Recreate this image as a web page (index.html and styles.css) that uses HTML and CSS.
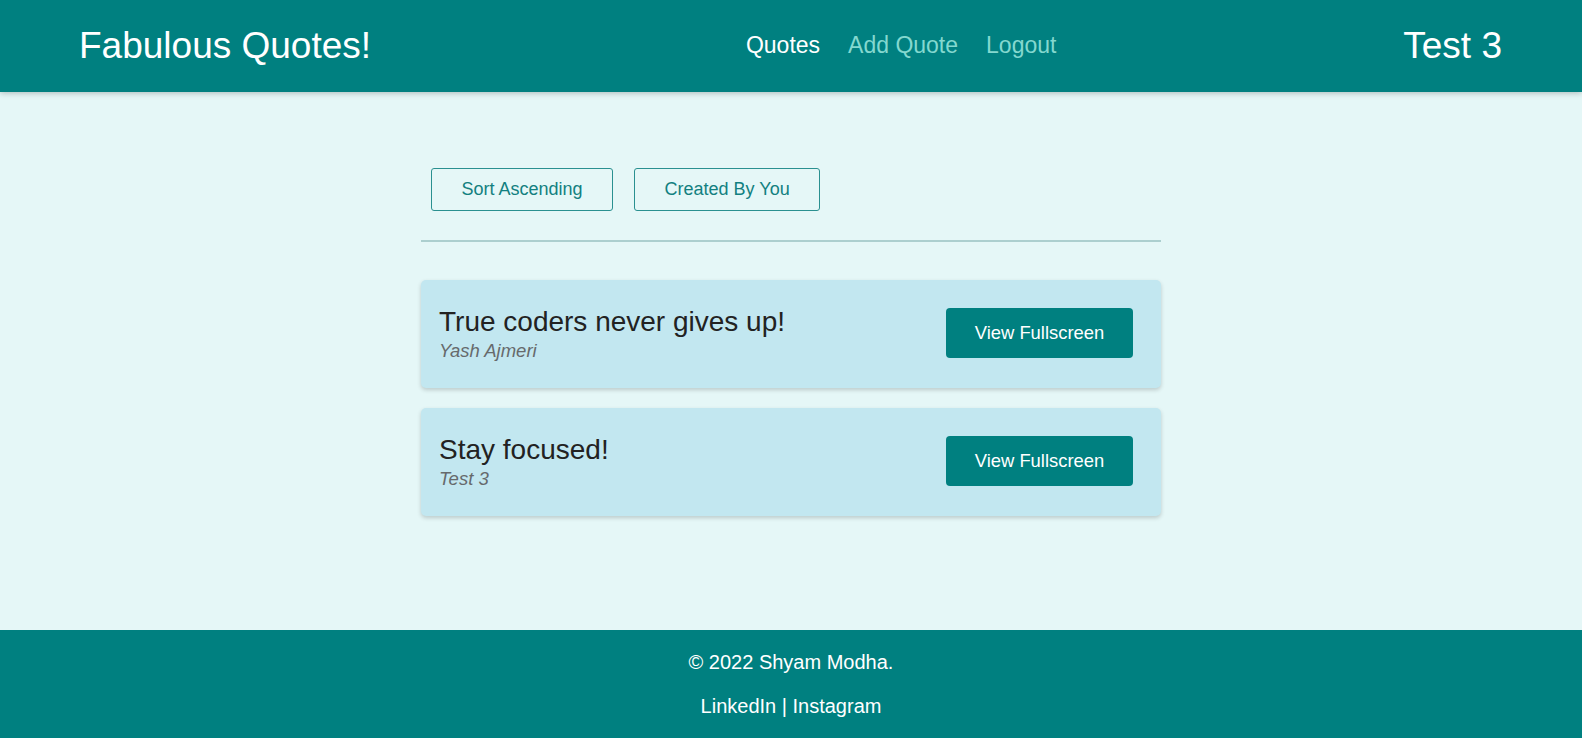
FILE: index.html
```html
<!DOCTYPE html>
<html lang="en">
<head>
<meta charset="utf-8">
<title>Fabulous Quotes!</title>
<link rel="stylesheet" href="styles.css">
</head>
<body>
<header class="header">
  <div class="logo">Fabulous Quotes!</div>
  <nav class="nav">
    <a class="nav-link active" href="#">Quotes</a>
    <a class="nav-link" href="#">Add Quote</a>
    <a class="nav-link" href="#">Logout</a>
  </nav>
  <div class="user">Test 3</div>
</header>
<main class="main">
  <div class="container">
    <div class="toolbar">
      <button class="btn-outline">Sort Ascending</button>
      <button class="btn-outline">Created By You</button>
    </div>
    <hr class="divider">
    <ul class="quote-list">
      <li class="quote-card">
        <figure class="quote-body">
          <blockquote class="quote-text">True coders never gives up!</blockquote>
          <figcaption class="quote-author">Yash Ajmeri</figcaption>
        </figure>
        <a class="btn-solid" href="#">View Fullscreen</a>
      </li>
      <li class="quote-card">
        <figure class="quote-body">
          <blockquote class="quote-text">Stay focused!</blockquote>
          <figcaption class="quote-author">Test 3</figcaption>
        </figure>
        <a class="btn-solid" href="#">View Fullscreen</a>
      </li>
    </ul>
  </div>
</main>
<footer class="footer">
  <p class="footer-line">© 2022 Shyam Modha.</p>
  <p class="footer-line"><a href="#">LinkedIn</a> | <a href="#">Instagram</a></p>
</footer>
</body>
</html>
```

FILE: styles.css
```css
* { box-sizing: border-box; }

html, body {
  margin: 0;
  padding: 0;
}

body {
  font-family: "Liberation Sans", Arial, sans-serif;
  background: #e5f7f7;
  min-height: 100vh;
  display: flex;
  flex-direction: column;
}

.header {
  height: 92px;
  background: #008080;
  display: flex;
  align-items: center;
  justify-content: space-between;
  padding: 0 80px 0 79px;
  box-shadow: 0 1px 6px rgba(0, 0, 0, 0.25);
  position: relative;
  z-index: 1;
}

.logo {
  color: #ffffff;
  font-size: 37px;
  line-height: 1;
  padding-bottom: 2px;
}

.nav {
  display: flex;
  gap: 28px;
  padding-left: 28px;
}

.nav-link {
  color: #84d8cf;
  text-decoration: none;
  font-size: 23px;
  line-height: 1;
  padding-bottom: 2px;
}

.nav-link.active {
  color: #ffffff;
}

.user {
  color: #ffffff;
  font-size: 37px;
  line-height: 1;
  padding-bottom: 2px;
}

.main {
  flex: 1;
  display: flex;
  justify-content: center;
  padding-top: 76px;
}

.container {
  width: 740px;
}

.toolbar {
  display: flex;
  gap: 21px;
  padding-left: 10px;
}

.btn-outline {
  font-family: "Liberation Sans", Arial, sans-serif;
  font-size: 18px;
  color: #128080;
  background: transparent;
  border: 1px solid #2a9090;
  border-radius: 3px;
  height: 43px;
  padding: 0 29.5px;
  cursor: pointer;
}

.divider {
  border: none;
  height: 2px;
  background: #accfcf;
  margin: 29px 0 38px;
}

.quote-list {
  list-style: none;
  margin: 0;
  padding: 0;
  display: flex;
  flex-direction: column;
  gap: 20px;
}

.quote-card {
  background: #c2e7f0;
  border-radius: 5px;
  box-shadow: 0 2px 4px rgba(0, 0, 0, 0.18);
  display: flex;
  align-items: center;
  justify-content: space-between;
  padding: 24px 28px 26px 18px;
}

.quote-body {
  margin: 0;
}

.quote-text {
  margin: 0;
  font-size: 28px;
  line-height: 36px;
  color: #222222;
}

.quote-author {
  font-size: 18.5px;
  line-height: 22px;
  font-style: italic;
  color: #666a6c;
}

.btn-solid {
  display: inline-flex;
  align-items: center;
  justify-content: center;
  width: 187px;
  height: 50px;
  background: #008080;
  color: #ffffff;
  text-decoration: none;
  font-size: 18.4px;
  border-radius: 4px;
}

.footer {
  background: #008080;
  color: #ffffff;
  text-align: center;
  padding: 20px 0;
}

.footer-line {
  margin: 0;
  font-size: 20px;
  line-height: 24px;
}

.footer-line + .footer-line {
  margin-top: 20px;
}

.footer-line a {
  color: #ffffff;
  text-decoration: none;
}
```
